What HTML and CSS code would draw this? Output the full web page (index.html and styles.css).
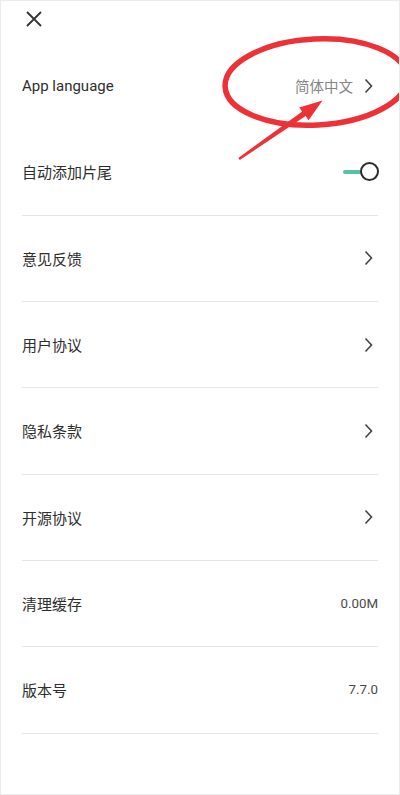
FILE: index.html
```html
<!DOCTYPE html>
<html lang="zh-CN">
<head>
<meta charset="utf-8">
<title>设置</title>
<link rel="stylesheet" href="styles.css">
</head>
<body>
<div class="page">
  <header class="topbar">
    <button class="close" aria-label="关闭">
      <svg width="16" height="16" viewBox="0 0 16 16"><path d="M1 1 L15 15 M15 1 L1 15" stroke="#333" stroke-width="1.8" fill="none"/></svg>
    </button>
  </header>
  <ul class="list">
    <li class="row no-line">
      <span class="label">App language</span>
      <span class="right"><span class="value lang">简体中文</span><svg class="chev" width="9" height="16" viewBox="0 0 9 16"><path d="M1.5 1.5 L7.5 8 L1.5 14.5" stroke="#444" stroke-width="1.6" fill="none"/></svg></span>
    </li>
    <li class="row">
      <span class="label">自动添加片尾</span>
      <span class="toggle"><span class="track"></span><span class="knob"></span></span>
    </li>
    <li class="row">
      <span class="label">意见反馈</span>
      <svg class="chev" width="9" height="16" viewBox="0 0 9 16"><path d="M1.5 1.5 L7.5 8 L1.5 14.5" stroke="#444" stroke-width="1.6" fill="none"/></svg>
    </li>
    <li class="row">
      <span class="label">用户协议</span>
      <svg class="chev" width="9" height="16" viewBox="0 0 9 16"><path d="M1.5 1.5 L7.5 8 L1.5 14.5" stroke="#444" stroke-width="1.6" fill="none"/></svg>
    </li>
    <li class="row">
      <span class="label">隐私条款</span>
      <svg class="chev" width="9" height="16" viewBox="0 0 9 16"><path d="M1.5 1.5 L7.5 8 L1.5 14.5" stroke="#444" stroke-width="1.6" fill="none"/></svg>
    </li>
    <li class="row">
      <span class="label">开源协议</span>
      <svg class="chev" width="9" height="16" viewBox="0 0 9 16"><path d="M1.5 1.5 L7.5 8 L1.5 14.5" stroke="#444" stroke-width="1.6" fill="none"/></svg>
    </li>
    <li class="row">
      <span class="label">清理缓存</span>
      <span class="value num">0.00M</span>
    </li>
    <li class="row">
      <span class="label">版本号</span>
      <span class="value num">7.7.0</span>
    </li>
  </ul>
  <svg class="annot" width="400" height="795" viewBox="0 0 400 795">
    <ellipse cx="316" cy="82" rx="91" ry="43" transform="rotate(-3 316 82)" fill="none" stroke="#ec3237" stroke-width="5.5"/>
    <polygon fill="#ec3237" points="239.8,160 305.6,116 308.6,120.2 322.5,100.5 299.2,107.4 302.2,111.4 238.3,157.9"/>
  </svg>
</div>
</body>
</html>
```

FILE: styles.css
```css
* { box-sizing: border-box; }
html, body {
  margin: 0;
  padding: 0;
  background: #fff;
}
body {
  font-family: Roboto, "Noto Sans CJK SC", sans-serif;
  color: #2e2e2e;
}
.page {
  position: relative;
  width: 400px;
  height: 795px;
  border: 1px solid #ececec;
  overflow: hidden;
}
.topbar {
  height: 42px;
  display: flex;
  align-items: center;
  padding-left: 24px;
}
.close {
  border: 0;
  background: none;
  padding: 0;
  width: 18px;
  height: 18px;
  display: flex;
  align-items: center;
  justify-content: center;
  margin-top: -6px;
}
.list {
  list-style: none;
  margin: 0;
  padding: 0 21px;
}
.row {
  height: 86.33px;
  display: flex;
  align-items: center;
  justify-content: space-between;
  border-bottom: 1px solid #e6e6e6;
  font-size: 15px;
}
.row.no-line { border-bottom-color: transparent; }
.label { color: #2e2e2e; }
.right { display: flex; align-items: center; gap: 11px; }
.value.lang { color: #858585; font-size: 14.5px; }
.value.num { color: #4a4a4a; font-size: 13.3px; }
.chev { margin-right: 5px; display: block; }
.toggle {
  display: flex;
  align-items: center;
  margin-right: -1px;
}
.track {
  width: 19px;
  height: 4px;
  border-radius: 2px;
  background: #5bbfa6;
  margin-right: -2px;
}
.knob {
  width: 19px;
  height: 19px;
  border-radius: 50%;
  border: 2px solid #2b2b2b;
  background: #fff;
}
.annot {
  position: absolute;
  left: -1px;
  top: -1px;
  pointer-events: none;
}
```
